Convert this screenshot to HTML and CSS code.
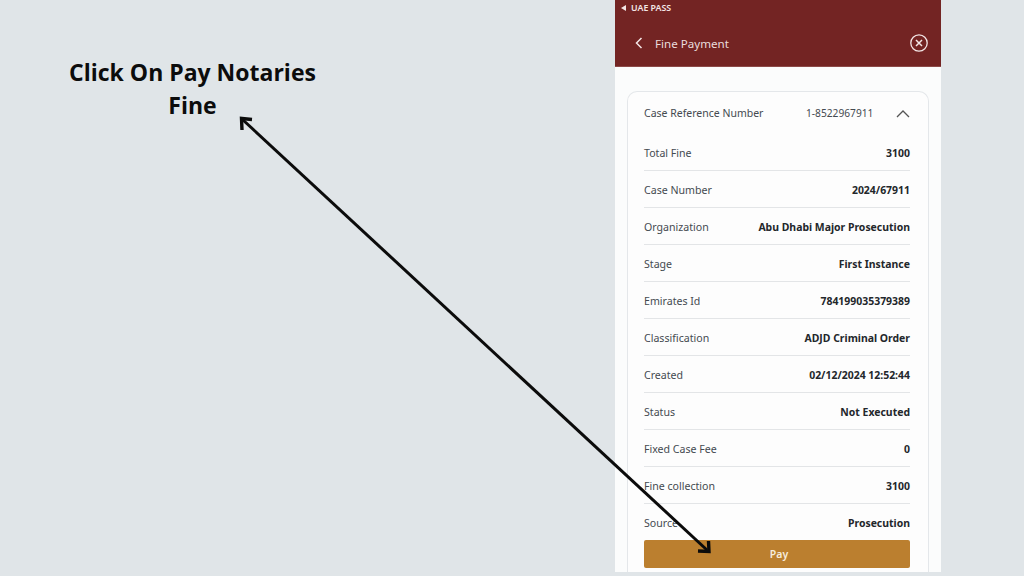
FILE: index.html
```html
<!DOCTYPE html>
<html lang="en">
<head>
<meta charset="utf-8">
<title>Fine Payment</title>
<link rel="stylesheet" href="styles.css">
</head>
<body>
<main class="slide">
  <section class="caption-area">
    <h1 class="caption">Click On Pay Notaries Fine</h1>
  </section>
  <section class="phone">
    <header class="app-header">
      <div class="status"><span class="status-back"></span>UAE PASS</div>
      <div class="nav">
        <svg class="nav-back" width="10" height="14" viewBox="0 0 10 14"><path d="M7.5 2 L2.5 7 L7.5 12" fill="none" stroke="#f3e6e6" stroke-width="1.5"/></svg>
        <span class="nav-title">Fine Payment</span>
        <svg class="nav-close" width="20" height="20" viewBox="0 0 20 20"><circle cx="10" cy="10" r="8.2" fill="none" stroke="#f3e6e6" stroke-width="1.3"/><path d="M7 7 L13 13 M13 7 L7 13" stroke="#f3e6e6" stroke-width="1.5"/></svg>
      </div>
    </header>
    <div class="content">
      <div class="card">
        <div class="card-head">
          <span class="ref-label">Case Reference Number</span>
          <span class="ref-value">1-8522967911</span>
          <svg class="chevron" width="14" height="9" viewBox="0 0 14 9"><path d="M1 8 L7 2 L13 8" fill="none" stroke="#555" stroke-width="1.3"/></svg>
        </div>
        <dl class="rows">
          <div class="row"><dt>Total Fine</dt><dd>3100</dd></div>
          <div class="row"><dt>Case Number</dt><dd>2024/67911</dd></div>
          <div class="row"><dt>Organization</dt><dd>Abu Dhabi Major Prosecution</dd></div>
          <div class="row"><dt>Stage</dt><dd>First Instance</dd></div>
          <div class="row"><dt>Emirates Id</dt><dd>784199035379389</dd></div>
          <div class="row"><dt>Classification</dt><dd>ADJD Criminal Order</dd></div>
          <div class="row"><dt>Created</dt><dd>02/12/2024 12:52:44</dd></div>
          <div class="row"><dt>Status</dt><dd>Not Executed</dd></div>
          <div class="row"><dt>Fixed Case Fee</dt><dd>0</dd></div>
          <div class="row"><dt>Fine collection</dt><dd>3100</dd></div>
          <div class="row row-last"><dt>Source</dt><dd>Prosecution</dd></div>
        </dl>
        <button class="pay" type="button">Pay</button>
      </div>
    </div>
  </section>
</main>
<svg class="arrow" width="1024" height="576" viewBox="0 0 1024 576">
  <path d="M243 120 L707 550" stroke="#0b0b0b" stroke-width="3" fill="none"/>
  <path d="M252 119.5 L241.5 118.5 L242 130" stroke="#0b0b0b" stroke-width="3.4" fill="none"/>
  <path d="M708.5 541 L709 551.5 L698 551" stroke="#0b0b0b" stroke-width="3.4" fill="none"/>
</svg>
</body>
</html>
```
FILE: styles.css
```css
* { box-sizing: border-box; margin: 0; padding: 0; }
html, body { width: 1024px; height: 576px; overflow: hidden; }
body { background: #e0e5e8; font-family: "Noto Sans", sans-serif; position: relative; }
.slide { display: flex; width: 1024px; height: 576px; }
.caption-area { width: 615px; padding: 56px 0 0 60px; }
.caption {
  width: 265px;
  font-family: "Open Sans", sans-serif;
  font-weight: 700;
  font-size: 23px;
  line-height: 33px;
  text-align: center;
  color: #0c0c0c;
}
.phone { width: 326px; height: 572px; background: #fbfcfc; display: flex; flex-direction: column; overflow: hidden; }
.app-header { flex: none; height: 67px; background: #732423; color: #f3e6e6; border-bottom: 1px solid #8c4a48; }
.status { display: flex; align-items: center; gap: 5px; padding: 1px 0 0 6px; height: 15px; font-size: 8.8px; font-weight: 600; }
.status-back { width: 0; height: 0; border-style: solid; border-width: 3px 5px 3px 0; border-color: transparent #f3e6e6 transparent transparent; }
.nav { display: flex; align-items: center; height: 20px; margin-top: 18px; padding: 0 12px 0 19px; }
.nav-title { margin-left: 11px; font-size: 11.6px; flex: 1; color: #eadcdc; }
.content { padding: 24px 12px 0; flex: 1; }
.card { height: 481px; background: #fdfdfd; border: 1px solid #e4e7ea; border-bottom: 0; border-radius: 10px 10px 0 0; padding: 0 18px 0 16px; }
.card-head { display: flex; align-items: center; height: 42px; font-size: 10.5px; color: #444a50; }
.ref-label { flex: none; width: 162px; }
.ref-value { flex: none; width: 79px; font-size: 10.2px; }
.chevron { flex: none; margin-left: 11px; margin-top: 1px; }
.rows { display: flex; flex-direction: column; }
.row { display: flex; justify-content: space-between; align-items: center; height: 37px; border-bottom: 1px solid #e3e5e7; font-size: 10.6px; padding-top: 1px; }
.row-last { border-bottom: 0; height: 36px; }
.row dt { color: #444a50; }
.row dd { color: #23272b; font-weight: 700; font-size: 10.45px; }
.pay { display: block; width: 100%; height: 28px; padding-left: 4px; background: #bb7f2f; border: 0; border-radius: 2px; color: #f7ecdd; font-family: "Noto Sans", sans-serif; font-size: 10.5px; font-weight: 600; }
.arrow { position: absolute; left: 0; top: 0; pointer-events: none; }
```
